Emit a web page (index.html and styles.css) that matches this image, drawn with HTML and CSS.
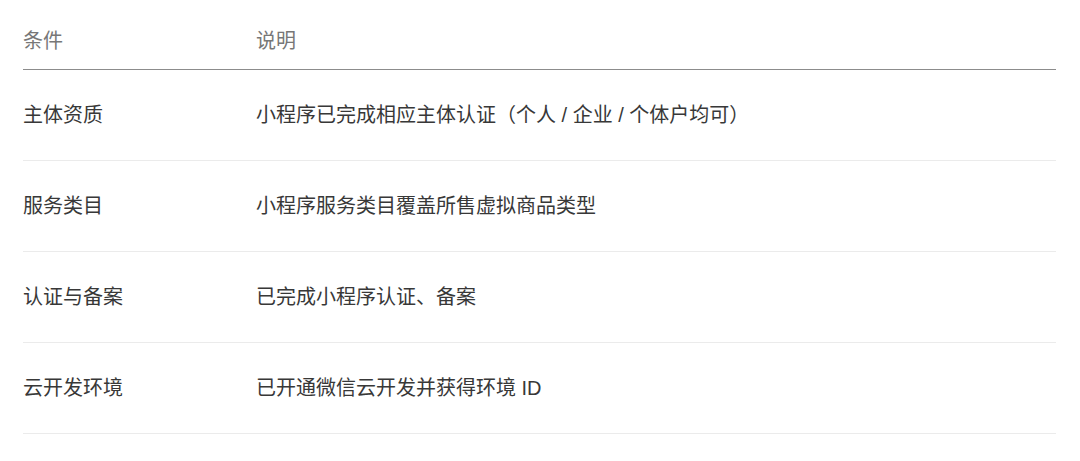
FILE: index.html
```html
<!DOCTYPE html>
<html lang="zh-CN">
  <head>
    <meta charset="UTF-8" />
    <meta name="viewport" content="width=device-width, initial-scale=1.0" />
    <title>开通条件</title>
    <link rel="stylesheet" href="styles.css">
  </head>
  <body>
    <div class="container">
      <table class="req-table">
        <thead>
          <tr>
            <th class="col-name">条件</th>
            <th>说明</th>
          </tr>
        </thead>
        <tbody>
          <tr>
            <td>主体资质</td>
            <td>小程序已完成相应主体认证（个人 / 企业 / 个体户均可）</td>
          </tr>
          <tr>
            <td>服务类目</td>
            <td>小程序服务类目覆盖所售虚拟商品类型</td>
          </tr>
          <tr>
            <td>认证与备案</td>
            <td>已完成小程序认证、备案</td>
          </tr>
          <tr>
            <td>云开发环境</td>
            <td>已开通微信云开发并获得环境 ID</td>
          </tr>
        </tbody>
      </table>
    </div>
  </body>
</html>
```

FILE: styles.css
```css
* {
  margin: 0;
  padding: 0;
  box-sizing: border-box;
}

body {
  background-color: #fff;
  font-family: "Liberation Sans", "Noto Sans CJK SC", sans-serif;
  font-size: 20px;
}

.container {
  padding: 0 24px 0 23px;
}

.req-table {
  width: 100%;
  border-collapse: collapse;
}

.req-table th {
  text-align: left;
  font-weight: normal;
  color: #777;
  line-height: 28px;
  padding: 27px 0 14px;
  border-bottom: 1px solid #8c8c8c;
}

.req-table .col-name {
  width: 233px;
}

.req-table td {
  color: #383838;
  line-height: 28px;
  padding: 31px 0;
  border-bottom: 1px solid #ebebeb;
}
```
